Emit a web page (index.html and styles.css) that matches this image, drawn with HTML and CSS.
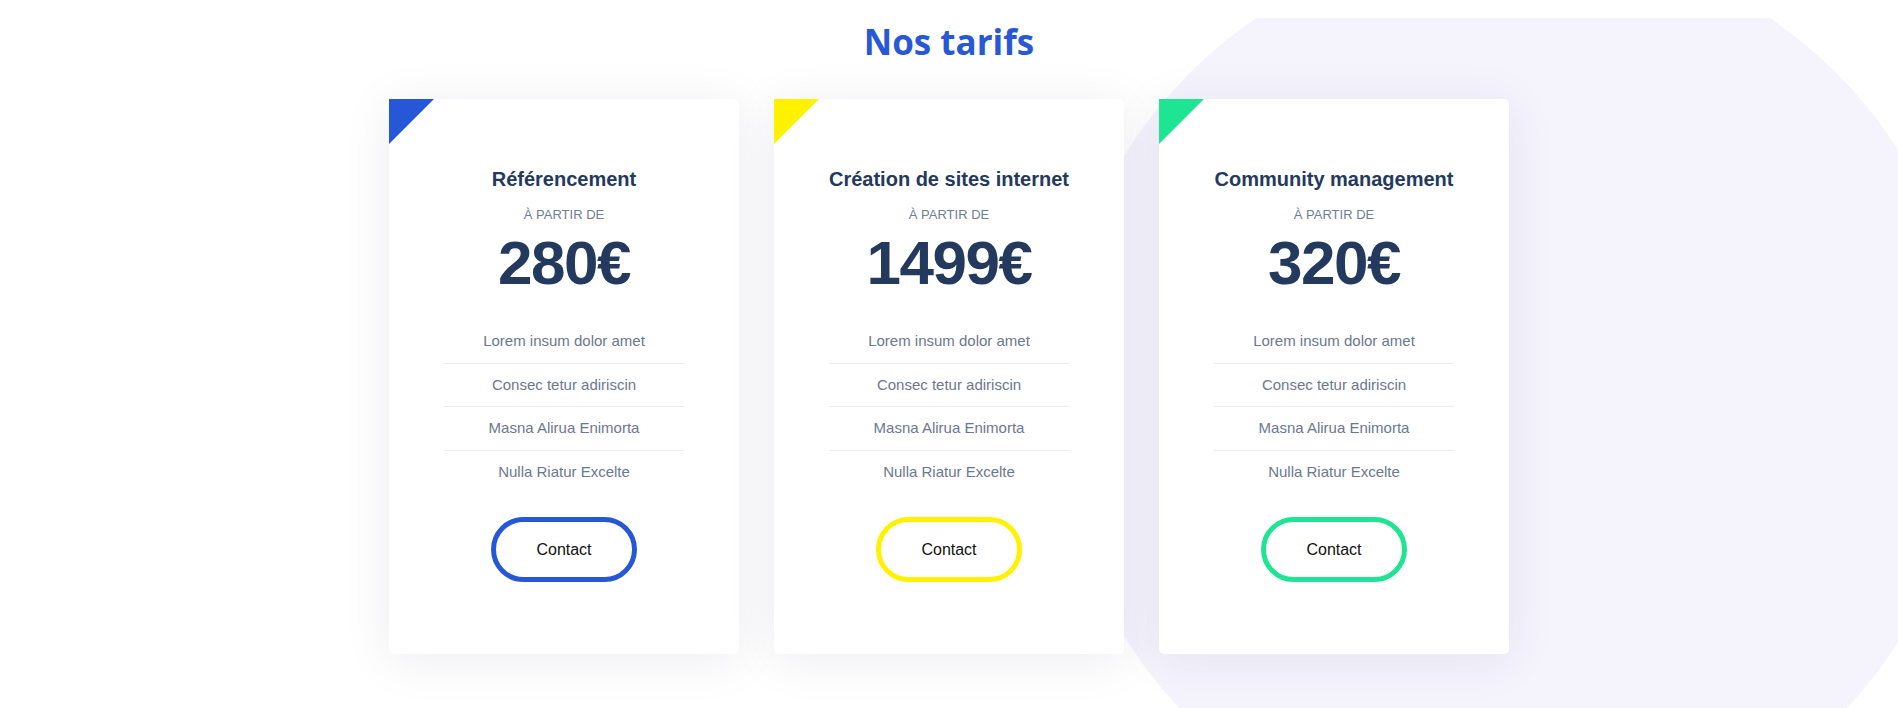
FILE: index.html
```html
<!DOCTYPE html>
<html lang="fr">
<head>
<meta charset="utf-8">
<title>Nos tarifs</title>
<link rel="stylesheet" href="styles.css">
</head>
<body>
<section class="pricing">
  <div class="blob"></div>
  <h2 class="pricing-title">Nos tarifs</h2>
  <div class="cards">
    <article class="card card-blue">
      <span class="corner"></span>
      <h3 class="card-title">Référencement</h3>
      <p class="card-from">À PARTIR DE</p>
      <p class="card-price">280€</p>
      <ul class="features">
        <li>Lorem insum dolor amet</li>
        <li>Consec tetur adiriscin</li>
        <li>Masna Alirua Enimorta</li>
        <li>Nulla Riatur Excelte</li>
      </ul>
      <a class="btn" href="#">Contact</a>
    </article>
    <article class="card card-yellow">
      <span class="corner"></span>
      <h3 class="card-title">Création de sites internet</h3>
      <p class="card-from">À PARTIR DE</p>
      <p class="card-price">1499€</p>
      <ul class="features">
        <li>Lorem insum dolor amet</li>
        <li>Consec tetur adiriscin</li>
        <li>Masna Alirua Enimorta</li>
        <li>Nulla Riatur Excelte</li>
      </ul>
      <a class="btn" href="#">Contact</a>
    </article>
    <article class="card card-green">
      <span class="corner"></span>
      <h3 class="card-title">Community management</h3>
      <p class="card-from">À PARTIR DE</p>
      <p class="card-price">320€</p>
      <ul class="features">
        <li>Lorem insum dolor amet</li>
        <li>Consec tetur adiriscin</li>
        <li>Masna Alirua Enimorta</li>
        <li>Nulla Riatur Excelte</li>
      </ul>
      <a class="btn" href="#">Contact</a>
    </article>
  </div>
</section>
</body>
</html>
```

FILE: styles.css
```css
* { box-sizing: border-box; }

html, body {
  margin: 0;
  padding: 0;
  background: #ffffff;
}

body {
  font-family: "Liberation Sans", Arial, sans-serif;
  overflow: hidden;
}

.pricing {
  position: relative;
  margin-top: 18px;
  height: 690px;
  overflow: hidden;
}

.blob {
  position: absolute;
  left: 1056px;
  top: -79px;
  width: 914px;
  height: 914px;
  border-radius: 50%;
  background: #f5f4fd;
}

.pricing-title {
  position: relative;
  margin: 0;
  font-family: "Open Sans", sans-serif;
  font-weight: 700;
  font-size: 35px;
  line-height: 47px;
  text-align: center;
  color: #2858d6;
}

.cards {
  position: relative;
  display: flex;
  justify-content: center;
  gap: 35px;
  margin-top: 34px;
}

.card {
  position: relative;
  width: 350px;
  display: flex;
  flex-direction: column;
  align-items: center;
  padding: 68px 0 71.5px;
  background: #ffffff;
  border-radius: 0 5px 5px 5px;
  box-shadow: 0 6px 50px rgba(25, 30, 80, 0.08);
  overflow: hidden;
}

.corner {
  position: absolute;
  left: 0;
  top: 0;
  width: 45px;
  height: 45px;
  clip-path: polygon(0 0, 100% 0, 0 100%);
}

.card-blue .corner { background: #2557d6; }
.card-yellow .corner { background: #fff200; }
.card-green .corner { background: #1de592; }

.card-title {
  margin: 0;
  font-size: 20px;
  line-height: 24px;
  font-weight: 700;
  color: #233a5e;
}

.card-from {
  margin: 16px 0 0;
  font-size: 13px;
  line-height: 16px;
  color: #6f7d95;
}

.card-price {
  margin: 5px 0 0;
  font-size: 62px;
  line-height: 70px;
  font-weight: 700;
  letter-spacing: -1.5px;
  color: #233a5e;
}

.features {
  list-style: none;
  margin: 22px 0 0;
  padding: 0;
  width: 240px;
}

.features li {
  padding: 12px 0 12.5px;
  font-size: 15px;
  line-height: 18px;
  text-align: center;
  color: #6b7891;
  border-bottom: 1px solid #ededed;
}

.features li:last-child {
  border-bottom: none;
}

.btn {
  display: block;
  margin-top: 24px;
  width: 146px;
  height: 65px;
  border: 5px solid;
  border-radius: 33px;
  font-size: 16px;
  line-height: 55px;
  text-align: center;
  color: #111111;
  text-decoration: none;
  background: #ffffff;
}

.card-blue .btn { border-color: #2557d6; }
.card-yellow .btn { border-color: #fff200; }
.card-green .btn { border-color: #1de592; }
```
